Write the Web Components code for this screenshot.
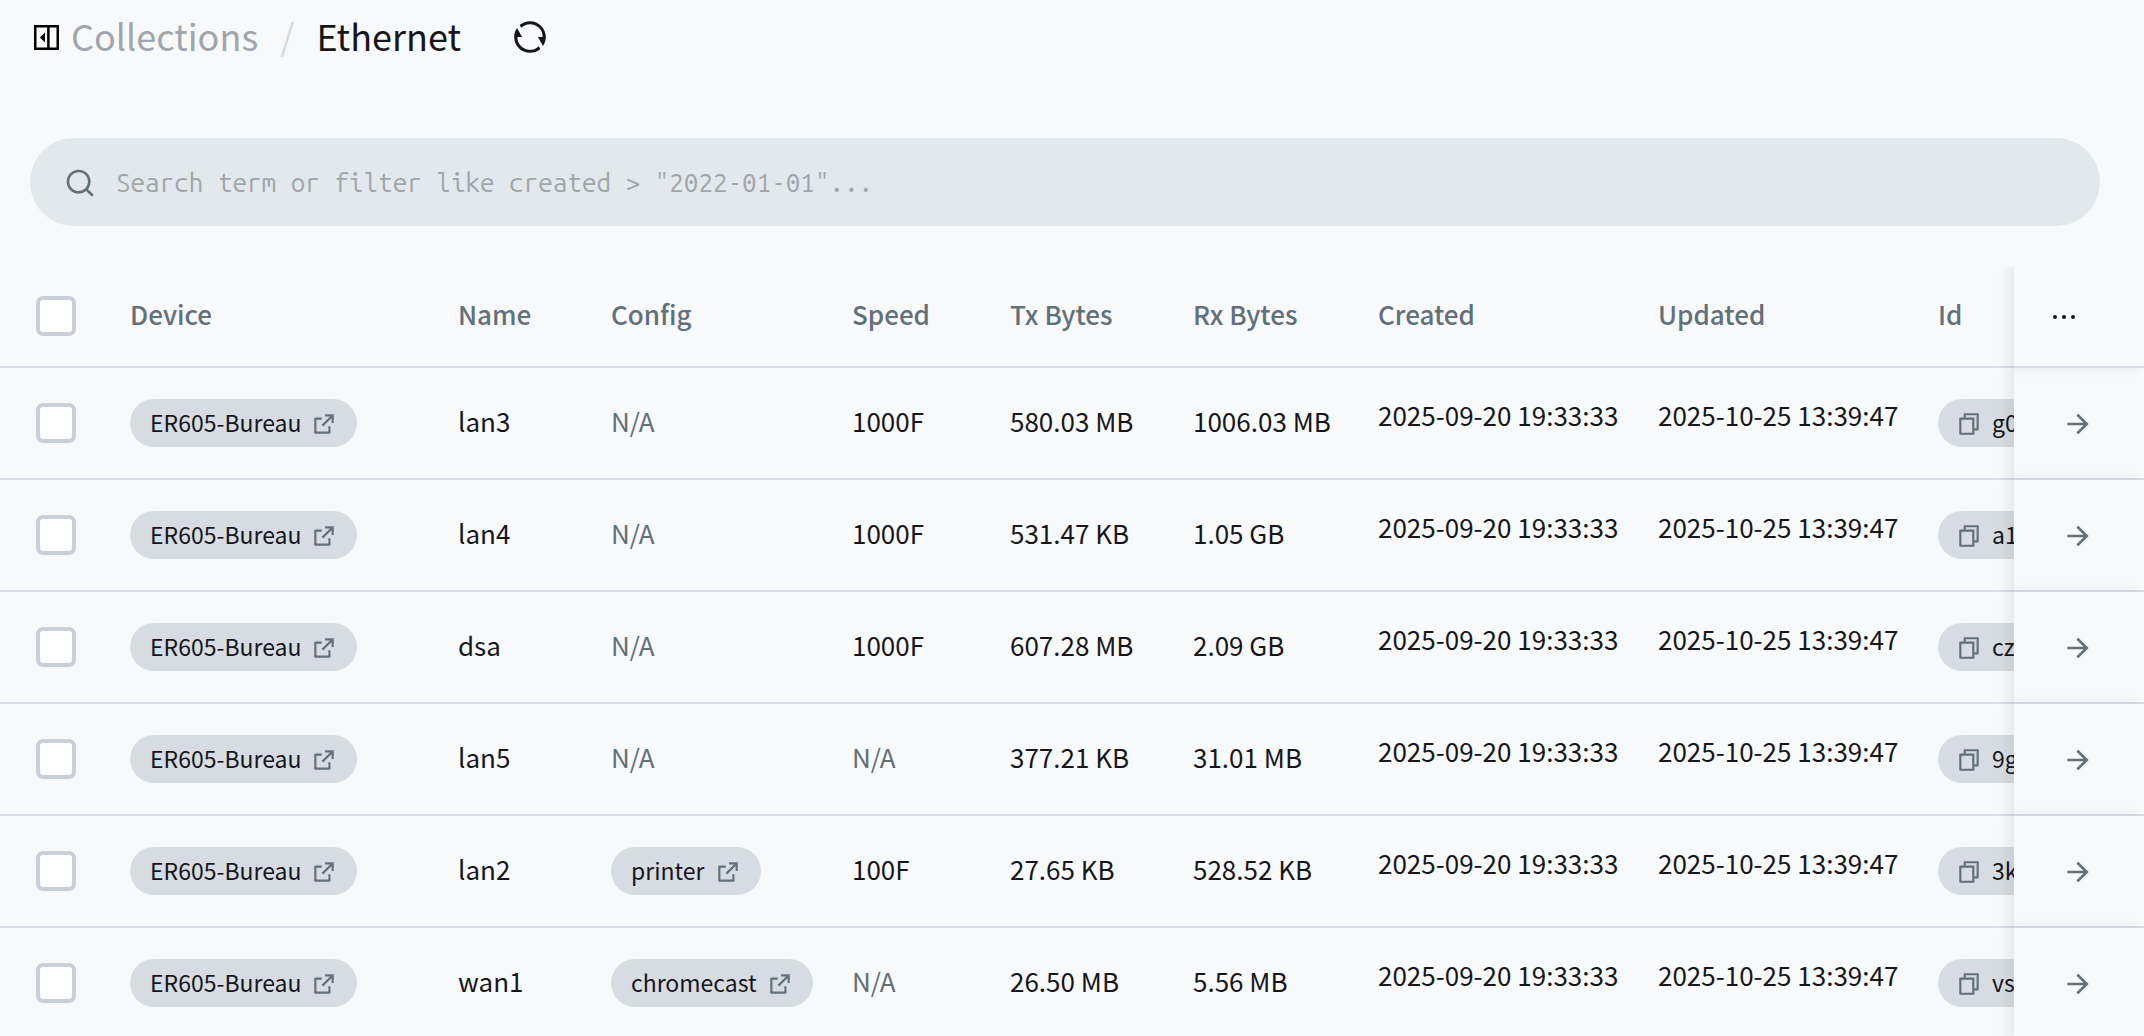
<!DOCTYPE html>
<html lang="en">
<head>
<meta charset="utf-8">
<title>Ethernet</title>
<style>
html, body { margin: 0; height: 100%; }
body { background: #f8f9fa; color: #16161a; font-family: "Noto Sans CJK SC", "Noto Sans", sans-serif; font-size: 26px; }
</style>
</head>
<body>
<collection-page></collection-page>
<script>
const ICONS = {
  panel: ['0 0 24 24', '<path fill-rule="evenodd" d="M0 0h24v24H0zM2.400 2.400v19.200h10.200V2.400zM15 2.400v19.200h6.600V2.400zM10.500 7.200v9.600L5.700 12z"/>'],
  refresh: ['0 0 24 24', '<path d="M5.463 4.433A9.961 9.961 0 0 1 12 2c5.523 0 10 4.477 10 10 0 2.136-.67 4.116-1.81 5.740L17 12h3A8 8 0 0 0 6.460 6.228l-.997-1.795zm13.074 15.134A9.961 9.961 0 0 1 12 22C6.477 22 2 17.523 2 12c0-2.136.67-4.116 1.810-5.740L7 12H4a8 8 0 0 0 13.540 5.772l.997 1.795z"/>'],
  search: ['0 0 24 24', '<path d="M18.031 16.617l4.283 4.282-1.415 1.415-4.282-4.283A8.960 8.960 0 0 1 11 20c-4.968 0-9-4.032-9-9s4.032-9 9-9 9 4.032 9 9a8.960 8.960 0 0 1-1.969 5.617zm-2.006-.742A6.977 6.977 0 0 0 18 11c0-3.868-3.133-7-7-7-3.868 0-7 3.132-7 7 0 3.867 3.132 7 7 7a6.977 6.977 0 0 0 4.875-1.975l.15-.15z"/>'],
  external: ['0 0 24 24', '<path d="M10 6v2H5v11h11v-5h2v6a1 1 0 0 1-1 1H4a1 1 0 0 1-1-1V7a1 1 0 0 1 1-1h6zm11-3v8h-2V6.413l-7.793 7.794-1.414-1.414L17.585 5H13V3h8z"/>'],
  copy: ['0 0 24 24', '<path d="M7 6V3a1 1 0 0 1 1-1h12a1 1 0 0 1 1 1v14a1 1 0 0 1-1 1h-3v3c0 .552-.45 1-1.007 1H4.007A1.001 1.001 0 0 1 3 21l.003-14c0-.552.45-1 1.006-1H7zM5.003 8L5 20h10V8H5.003zM9 6h8v10h2V4H9v2z"/>'],
  arrow: ['0 0 24 24', '<path d="M16.172 11l-5.364-5.364 1.414-1.414L20 12l-7.778 7.778-1.414-1.414L16.172 13H4v-2z"/>'],
  more: ['0 0 24 24', '<circle cx="5.250" cy="12" r="1.500"/><circle cx="12" cy="12" r="1.500"/><circle cx="18.750" cy="12" r="1.500"/>']
};

function render(host, html) {
  const t = document.createElement('template');
  t.innerHTML = html;
  host.attachShadow({ mode: 'open' }).append(t.content.cloneNode(true));
}

class UiIcon extends HTMLElement {
  connectedCallback() {
    if (this.shadowRoot) return;
    const [box, shape] = ICONS[this.getAttribute('name')];
    render(this, `<style>
      :host { display: inline-block; flex: none; padding-top: 2px; }
      svg { display: block; width: var(--icon-size, 26px); height: var(--icon-size, 26px); fill: currentColor; }
    </style><svg viewBox="${box}" aria-hidden="true">${shape}</svg>`);
  }
}
customElements.define('ui-icon', UiIcon);

class PageHeader extends HTMLElement {
  connectedCallback() {
    if (this.shadowRoot) return;
    render(this, `<style>
      :host { display: flex; align-items: center; height: 72px; padding: 0 44px 0 34px; font-size: 36px; line-height: 52px; }
      button { display: flex; padding: 0; border: 0; background: none; color: #000; cursor: pointer; }
      .toggle { --icon-size: 25px; margin-right: 12px; }
      .refresh { --icon-size: 38px; margin-left: 50px; color: #16161a; }
      nav { display: flex; padding-bottom: 2px; }
      a { color: #a0a6ac; text-decoration: none; }
      .sep { margin: 0 22px; color: #d5d9dd; }
    </style>
    <button class="toggle" type="button" aria-label="Toggle sidebar"><ui-icon name="panel"></ui-icon></button>
    <nav aria-label="Breadcrumb"><a href="#collections">Collections</a><span class="sep">/</span><slot></slot></nav>
    <button class="refresh" type="button" aria-label="Refresh"><ui-icon name="refresh"></ui-icon></button>`);
  }
}
customElements.define('page-header', PageHeader);

class SearchBar extends HTMLElement {
  connectedCallback() {
    if (this.shadowRoot) return;
    render(this, `<style>
      :host { display: flex; align-items: center; gap: 20px; height: 88px; margin: 66px 44px 40px 30px; padding: 0 34px; box-sizing: border-box; border-radius: 44px; background: #e2e8eb; }
      label { --icon-size: 32px; display: flex; color: #617079; }
      input { flex: 1; min-width: 0; height: 60px; padding: 0; border: 0; outline: 0; background: none; color: #16161a;
        font: 26px "Ubuntu Mono", "Noto Sans Mono CJK SC", "Liberation Mono", monospace; }
      input::placeholder { color: #a0a5a8; opacity: 1; }
    </style>
    <label for="q" aria-label="Search"><ui-icon name="search"></ui-icon></label>
    <input id="q" type="text" placeholder='Search term or filter like created > "2022-01-01"...'>`);
  }
}
customElements.define('search-bar', SearchBar);

class RecordChip extends HTMLElement {
  connectedCallback() {
    if (this.shadowRoot) return;
    const copy = this.hasAttribute('copy');
    render(this, `<style>
      :host { display: inline-flex; vertical-align: middle; }
      a, div { display: flex; align-items: center; gap: 10px; height: 48px; padding: 0 20px; box-sizing: border-box; border-radius: 24px;
        background: #d7dce3; color: #16161a; font-size: 23px; line-height: 34px; text-decoration: none; white-space: nowrap; }
      div { padding: 0 18px; min-width: 220px; }
      span { padding-bottom: 2px; }
      ui-icon { color: #617079; }
      button { display: flex; padding: 0; border: 0; background: none; cursor: pointer; }
    </style>` + (copy
      ? `<div><button type="button" aria-label="Copy"><ui-icon name="copy"></ui-icon></button><span><slot></slot></span></div>`
      : `<a href="#record"><span><slot></slot></span><ui-icon name="external"></ui-icon></a>`));
  }
}
customElements.define('record-chip', RecordChip);

const COLUMNS = ['Device', 'Name', 'Config', 'Speed', 'Tx Bytes', 'Rx Bytes', 'Created', 'Updated', 'Id'];
const ROWS = [
  ['lan3', '', '1000F', '580.03 MB', '1006.03 MB', 'g0'],
  ['lan4', '', '1000F', '531.47 KB', '1.05 GB', 'a1'],
  ['dsa', '', '1000F', '607.28 MB', '2.09 GB', 'cz'],
  ['lan5', '', '', '377.21 KB', '31.01 MB', '9g'],
  ['lan2', 'printer', '100F', '27.65 KB', '528.52 KB', '3k'],
  ['wan1', 'chromecast', '', '26.50 MB', '5.56 MB', 'vs']
];

class RecordTable extends HTMLElement {
  connectedCallback() {
    if (this.shadowRoot) return;
    const text = v => v ? `<td class="text">${v}</td>` : '<td class="text none">N/A</td>';
    const rows = ROWS.map(([name, config, speed, tx, rx, id]) => `<tr>
      <td class="check"><input type="checkbox" aria-label="Select ${name}"></td>
      <td><record-chip>ER605-Bureau</record-chip></td>
      ${text(name)}
      ${config ? `<td><record-chip>${config}</record-chip></td>` : text('')}
      ${text(speed)}${text(tx)}${text(rx)}
      <td class="date">2025-09-20 19:33:33</td>
      <td class="date">2025-10-25 13:39:47</td>
      <td><record-chip copy>${id}</record-chip></td>
      <td class="action"><button type="button" aria-label="Open ${name}"><ui-icon name="arrow"></ui-icon></button></td>
    </tr>`).join('');
    render(this, `<style>
      :host { display: block; flex: 1; min-height: 0; overflow: auto; scrollbar-width: none; }
      table { table-layout: fixed; width: 2300px; min-width: 100%; border-collapse: separate; border-spacing: 0; line-height: 38px; }
      th, td { box-sizing: border-box; height: 112px; padding: 0 20px; border-bottom: 2px solid #d7dce3; text-align: left; white-space: nowrap; vertical-align: middle; }
      th { height: 102px; color: #617079; font-weight: 500; }
      .none { color: #617079; }
      .text { padding-bottom: 4px; }
      .date { padding-bottom: 16px; }
      .check { padding: 0 34px 0 36px; }
      input { display: block; appearance: none; width: 40px; height: 40px; margin: 0; box-sizing: border-box; border: 4px solid #c8cfd9; border-radius: 7px; background: #fff; }
      .action { position: sticky; right: 0; padding: 0 50px 0 20px; background: #f8f9fa; box-shadow: -6px 0 12px rgba(0, 0, 0, .07); }
      th.action { z-index: 1; }
      .action button { display: flex; align-items: center; justify-content: flex-end; width: 60px; height: 60px; padding: 0; border: 0; background: none; color: #617079; cursor: pointer; --icon-size: 32px; }
      th.action button { justify-content: center; color: #16161a; }
      .c0 { width: 110px } .c1 { width: 328px } .c2 { width: 153px } .c3 { width: 241px } .c4 { width: 158px }
      .c5 { width: 183px } .c6 { width: 185px } .c7, .c8 { width: 280px } .c10 { width: 130px }
    </style>
    <table>
      <colgroup>${[0,1,2,3,4,5,6,7,8,9,10].map(i => `<col class="c${i}">`).join('')}</colgroup>
      <thead><tr>
        <th class="check"><input type="checkbox" aria-label="Select all"></th>
        ${COLUMNS.map(c => `<th scope="col" class="text">${c}</th>`).join('')}
        <th class="action"><button type="button" aria-label="Toggle columns"><ui-icon name="more"></ui-icon></button></th>
      </tr></thead>
      <tbody>${rows}</tbody>
    </table>`);
  }
}
customElements.define('record-table', RecordTable);

class CollectionPage extends HTMLElement {
  connectedCallback() {
    if (this.shadowRoot) return;
    render(this, `<style>
      :host { display: flex; flex-direction: column; height: 100vh; overflow: hidden; }
    </style>
    <page-header>Ethernet</page-header>
    <search-bar></search-bar>
    <record-table></record-table>`);
  }
}
customElements.define('collection-page', CollectionPage);
</script>
</body>
</html>
